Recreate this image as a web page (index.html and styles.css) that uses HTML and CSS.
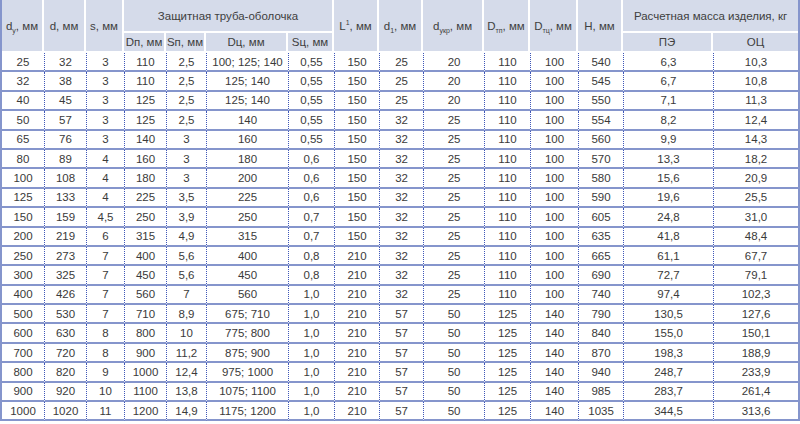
FILE: index.html
```html
<!DOCTYPE html>
<html lang="ru">
<head>
<meta charset="utf-8">
<link rel="stylesheet" href="styles.css">
</head>
<body>
<table class="spec">
<colgroup>
<col class="c42"><col class="c42"><col class="c38"><col class="c42"><col class="c40"><col class="c82"><col class="c46"><col class="c45"><col class="c44"><col class="c61"><col class="c46"><col class="c48"><col class="c45"><col class="c90"><col class="c85">
</colgroup>
<thead>
<tr class="h1">
<th rowspan="2">d<sub>у</sub>, мм</th>
<th rowspan="2">d, мм</th>
<th rowspan="2">s, мм</th>
<th colspan="4">Защитная труба-оболочка</th>
<th rowspan="2">L<sup>1</sup>, мм</th>
<th rowspan="2">d<sub>1</sub>, мм</th>
<th rowspan="2">d<sub>укр</sub>, мм</th>
<th rowspan="2">D<sub>тп</sub>, мм</th>
<th rowspan="2">D<sub>тц</sub>, мм</th>
<th rowspan="2">H, мм</th>
<th colspan="2" class="last">Расчетная масса изделия, кг</th>
</tr>
<tr class="h2">
<th>Dп, мм</th>
<th>Sп, мм</th>
<th>Dц, мм</th>
<th>Sц, мм</th>
<th>ПЭ</th>
<th class="last">ОЦ</th>
</tr>
</thead>
<tbody>
<tr><td>25</td><td>32</td><td>3</td><td>110</td><td>2,5</td><td>100; 125; 140</td><td>0,55</td><td>150</td><td>25</td><td>20</td><td>110</td><td>100</td><td>540</td><td>6,3</td><td>10,3</td></tr>
<tr><td>32</td><td>38</td><td>3</td><td>110</td><td>2,5</td><td>125; 140</td><td>0,55</td><td>150</td><td>25</td><td>20</td><td>110</td><td>100</td><td>545</td><td>6,7</td><td>10,8</td></tr>
<tr><td>40</td><td>45</td><td>3</td><td>125</td><td>2,5</td><td>125; 140</td><td>0,55</td><td>150</td><td>25</td><td>20</td><td>110</td><td>100</td><td>550</td><td>7,1</td><td>11,3</td></tr>
<tr><td>50</td><td>57</td><td>3</td><td>125</td><td>2,5</td><td>140</td><td>0,55</td><td>150</td><td>32</td><td>25</td><td>110</td><td>100</td><td>554</td><td>8,2</td><td>12,4</td></tr>
<tr><td>65</td><td>76</td><td>3</td><td>140</td><td>3</td><td>160</td><td>0,55</td><td>150</td><td>32</td><td>25</td><td>110</td><td>100</td><td>560</td><td>9,9</td><td>14,3</td></tr>
<tr><td>80</td><td>89</td><td>4</td><td>160</td><td>3</td><td>180</td><td>0,6</td><td>150</td><td>32</td><td>25</td><td>110</td><td>100</td><td>570</td><td>13,3</td><td>18,2</td></tr>
<tr><td>100</td><td>108</td><td>4</td><td>180</td><td>3</td><td>200</td><td>0,6</td><td>150</td><td>32</td><td>25</td><td>110</td><td>100</td><td>580</td><td>15,6</td><td>20,9</td></tr>
<tr><td>125</td><td>133</td><td>4</td><td>225</td><td>3,5</td><td>225</td><td>0,6</td><td>150</td><td>32</td><td>25</td><td>110</td><td>100</td><td>590</td><td>19,6</td><td>25,5</td></tr>
<tr><td>150</td><td>159</td><td>4,5</td><td>250</td><td>3,9</td><td>250</td><td>0,7</td><td>150</td><td>32</td><td>25</td><td>110</td><td>100</td><td>605</td><td>24,8</td><td>31,0</td></tr>
<tr><td>200</td><td>219</td><td>6</td><td>315</td><td>4,9</td><td>315</td><td>0,7</td><td>150</td><td>32</td><td>25</td><td>110</td><td>100</td><td>635</td><td>41,8</td><td>48,4</td></tr>
<tr><td>250</td><td>273</td><td>7</td><td>400</td><td>5,6</td><td>400</td><td>0,8</td><td>210</td><td>32</td><td>25</td><td>110</td><td>100</td><td>665</td><td>61,1</td><td>67,7</td></tr>
<tr><td>300</td><td>325</td><td>7</td><td>450</td><td>5,6</td><td>450</td><td>0,8</td><td>210</td><td>32</td><td>25</td><td>110</td><td>100</td><td>690</td><td>72,7</td><td>79,1</td></tr>
<tr><td>400</td><td>426</td><td>7</td><td>560</td><td>7</td><td>560</td><td>1,0</td><td>210</td><td>32</td><td>25</td><td>110</td><td>100</td><td>740</td><td>97,4</td><td>102,3</td></tr>
<tr><td>500</td><td>530</td><td>7</td><td>710</td><td>8,9</td><td>675; 710</td><td>1,0</td><td>210</td><td>57</td><td>50</td><td>125</td><td>140</td><td>790</td><td>130,5</td><td>127,6</td></tr>
<tr><td>600</td><td>630</td><td>8</td><td>800</td><td>10</td><td>775; 800</td><td>1,0</td><td>210</td><td>57</td><td>50</td><td>125</td><td>140</td><td>840</td><td>155,0</td><td>150,1</td></tr>
<tr><td>700</td><td>720</td><td>8</td><td>900</td><td>11,2</td><td>875; 900</td><td>1,0</td><td>210</td><td>57</td><td>50</td><td>125</td><td>140</td><td>870</td><td>198,3</td><td>188,9</td></tr>
<tr><td>800</td><td>820</td><td>9</td><td>1000</td><td>12,4</td><td>975; 1000</td><td>1,0</td><td>210</td><td>57</td><td>50</td><td>125</td><td>140</td><td>940</td><td>248,7</td><td>233,9</td></tr>
<tr><td>900</td><td>920</td><td>10</td><td>1100</td><td>13,8</td><td>1075; 1100</td><td>1,0</td><td>210</td><td>57</td><td>50</td><td>125</td><td>140</td><td>985</td><td>283,7</td><td>261,4</td></tr>
<tr><td>1000</td><td>1020</td><td>11</td><td>1200</td><td>14,9</td><td>1175; 1200</td><td>1,0</td><td>210</td><td>57</td><td>50</td><td>125</td><td>140</td><td>1035</td><td>344,5</td><td>313,6</td></tr>
</tbody>
</table>
</body>
</html>
```
FILE: styles.css
```css
html, body {
  margin: 0;
  padding: 0;
  background: #ffffff;
}

.spec {
  width: 800px;
  table-layout: fixed;
  border-collapse: separate;
  border-spacing: 0;
  border-left: 2px solid #8595cc;
  border-right: 2px solid #8595cc;
  font-family: "Liberation Sans", Arial, sans-serif;
  font-size: 11.5px;
  color: #3a3a3a;
}

.c38 { width: 38px; }
.c40 { width: 40px; }
.c42 { width: 42px; }
.c44 { width: 44px; }
.c45 { width: 45px; }
.c46 { width: 46px; }
.c48 { width: 48px; }
.c61 { width: 61px; }
.c82 { width: 82px; }
.c85 { width: 85px; }
.c90 { width: 90px; }

.spec th {
  box-sizing: border-box;
  background: #d5dbea;
  font-weight: normal;
  color: #404040;
  padding: 0;
  text-align: center;
  vertical-align: middle;
  border-right: 2px solid #ffffff;
  border-bottom: 2px solid #ffffff;
  white-space: nowrap;
}

.spec th.last {
  border-right: none;
}

.spec .h1 th {
  height: 33px;
}

.spec .h2 th {
  height: 20px;
}

.spec sub,
.spec sup {
  font-size: 7px;
  line-height: 0;
}

.spec td {
  box-sizing: border-box;
  height: 19.4px;
  padding: 0;
  text-align: center;
  vertical-align: middle;
  white-space: nowrap;
  border-bottom: 2px solid #8595cc;
  border-left: 1px dotted #3f57b8;
}

.spec td:first-child {
  border-left: none;
}
```
